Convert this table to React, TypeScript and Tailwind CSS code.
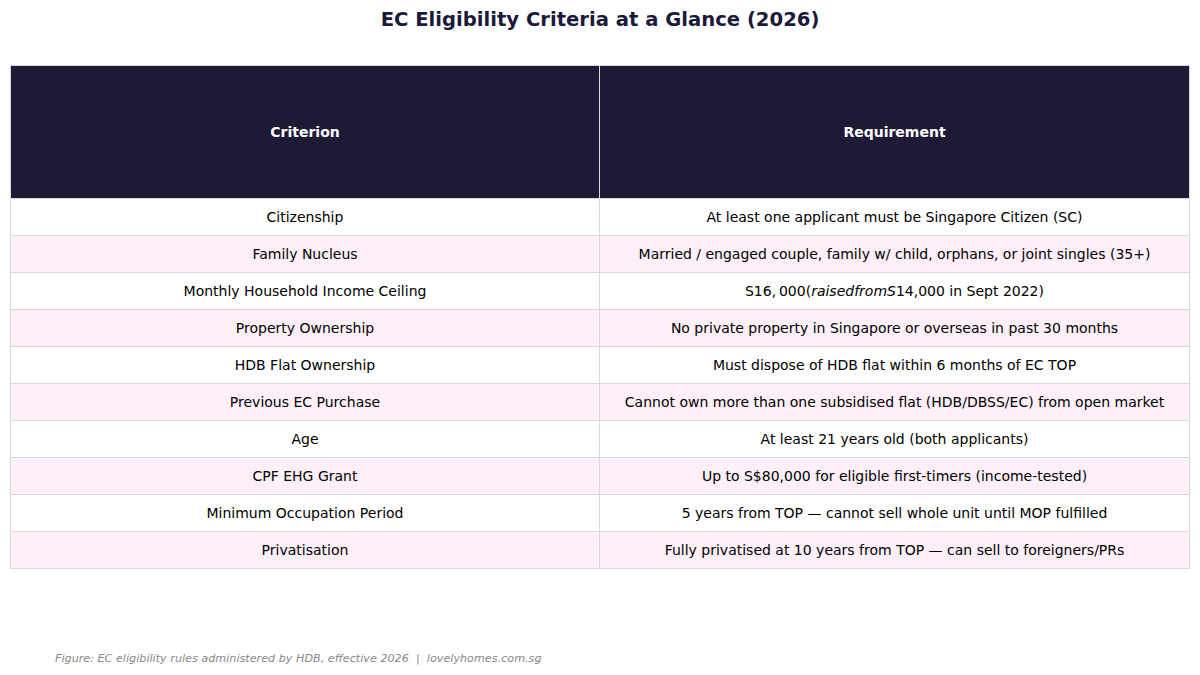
const rows: [string, React.ReactNode][] = [
  ["Citizenship", "At least one applicant must be Singapore Citizen (SC)"],
  ["Family Nucleus", "Married / engaged couple, family w/ child, orphans, or joint singles (35+)"],
  [
    "Monthly Household Income Ceiling",
    <>
      S16,&#8201;000(<span className="italic">raisedfromS</span>14,000 in Sept 2022)
    </>,
  ],
  ["Property Ownership", "No private property in Singapore or overseas in past 30 months"],
  ["HDB Flat Ownership", "Must dispose of HDB flat within 6 months of EC TOP"],
  ["Previous EC Purchase", "Cannot own more than one subsidised flat (HDB/DBSS/EC) from open market"],
  ["Age", "At least 21 years old (both applicants)"],
  ["CPF EHG Grant", "Up to S$80,000 for eligible first-timers (income-tested)"],
  ["Minimum Occupation Period", "5 years from TOP — cannot sell whole unit until MOP fulfilled"],
  ["Privatisation", "Fully privatised at 10 years from TOP — can sell to foreigners/PRs"],
];

export default function App() {
  return (
    <div
      className="w-[1200px] h-[675px] bg-white flex flex-col text-black"
      style={{ fontFamily: '"DejaVu Sans", sans-serif' }}
    >
      <h1 className="h-[39px] pt-[8px] text-center text-[19.6px] font-bold text-[#1c1a3a] leading-[24px]">
        EC Eligibility Criteria at a Glance (2026)
      </h1>
      <div className="mt-[26px] mx-[10px] border border-[#d9d9d9]">
        <div className="grid grid-cols-2 h-[132px] bg-[#1e1a35] text-white font-bold text-[14px]">
          <div className="flex items-center justify-center border-r border-[#d9d9d9]">Criterion</div>
          <div className="flex items-center justify-center">Requirement</div>
        </div>
        {rows.map(([c, r], i) => (
          <div
            key={c}
            className={`grid grid-cols-2 h-[37px] border-t border-[#d9d9d9] text-[14px] ${
              i % 2 === 1 ? "bg-[#fdf0f9]" : "bg-white"
            }`}
          >
            <div className="flex items-center justify-center border-r border-[#d9d9d9]">{c}</div>
            <div className="flex items-center justify-center whitespace-nowrap">{r}</div>
          </div>
        ))}
      </div>
      <div className="flex-1" />
      <p className="pl-[55px] pb-[7px] text-[11.2px] italic text-[#888888]">
        Figure: EC eligibility rules administered by HDB, effective 2026&nbsp;&nbsp;|&nbsp;&nbsp;lovelyhomes.com.sg
      </p>
    </div>
  );
}
